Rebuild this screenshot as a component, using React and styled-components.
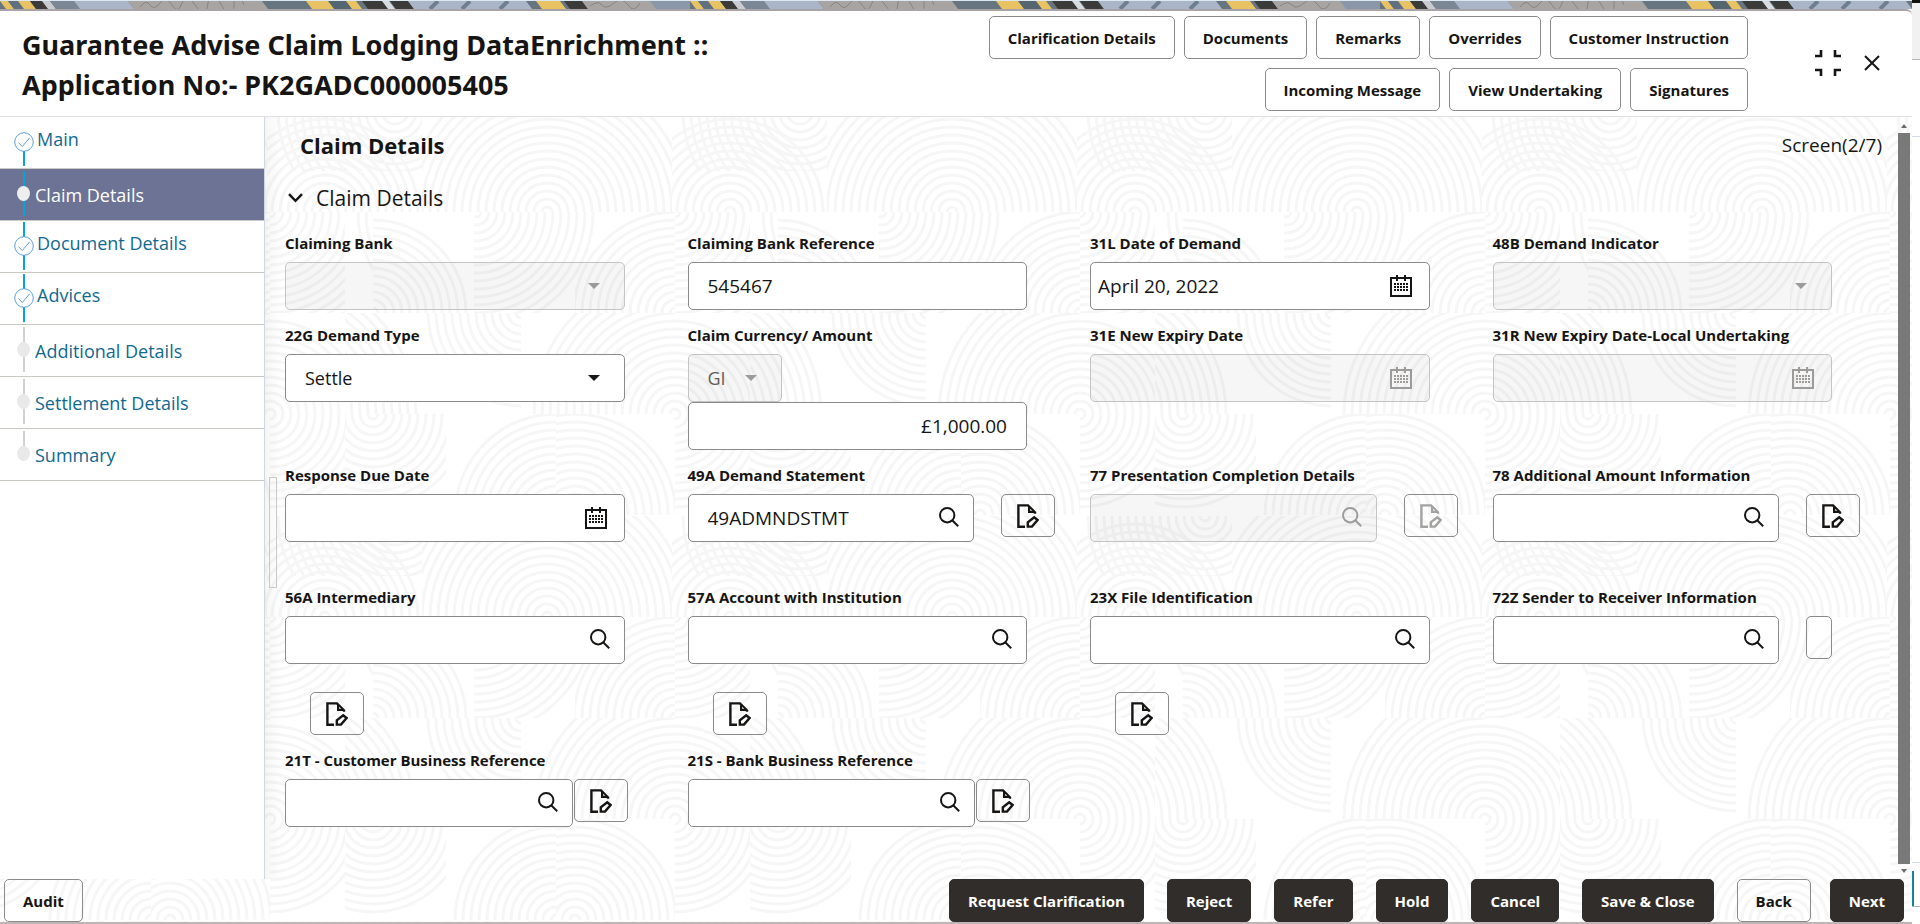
import React, { useId } from 'react'
import styled, { createGlobalStyle, css } from "styled-components";

const GlobalStyle = createGlobalStyle`
    * {
        box-sizing: border-box;
    }
    body {
        margin: 0;
        background: #fff;
        color: #161513;
        font-family: "Open Sans", "Noto Sans", sans-serif;
    }
    button, input, select {
        font-family: inherit;
        color: inherit;
        margin: 0;
    }
`;

const Page = styled.div`
    display: flex;
    min-height: 100vh;
`;

const Modal = styled.div`
    position: relative;
    flex: 1;
    min-width: 0;
    display: flex;
    flex-direction: column;
    border-bottom: 2px solid #c0b4b7;
`;

const Strip = styled.svg`
    position: relative;
    display: block;
    width: 100%;
    height: 9px;
`;

const Backdrop = styled.svg`
    position: absolute;
    inset: 0;
    width: 100%;
    height: 100%;
    pointer-events: none;
`;

const Header = styled.header`
    position: relative;
    display: flex;
    align-items: flex-start;
    justify-content: space-between;
    padding: 5px 32px 5px 22px;
    background: #fff;
    border-top: 2px solid #a9a3a5;
    border-bottom: 1px solid #dfdfdf;
    border-top-right-radius: 6px;
`;

const Title = styled.h1`
    flex: 1;
    max-width: 720px;
    margin: 0;
    padding-top: 9px;
    font-size: 27px;
    line-height: 40px;
    font-weight: 700;
    font-family: "Noto Sans", sans-serif;
`;

const HeaderSide = styled.div`
    display: flex;
    align-items: flex-start;
    gap: 66px;
`;

const HeaderButtons = styled.div`
    display: flex;
    flex-wrap: wrap;
    justify-content: flex-end;
    gap: 9px;
    width: 780px;
`;

const WindowButtons = styled.div`
    display: flex;
    align-items: center;
    gap: 22px;
    padding-top: 33px;
`;

const PlainButton = styled.button`
    display: flex;
    padding: 0;
    border: none;
    background: none;
    cursor: pointer;
`;

const Button = styled.button`
    height: 43px;
    padding: 0 18px;
    border: 1px solid #8b8989;
    border-radius: 5px;
    background: transparent;
    font-size: 15px;
    font-weight: 700;
    white-space: nowrap;
    cursor: pointer;
    ${({ $dark }) => $dark && css`
        background: #312d2a;
        border-color: #312d2a;
        color: #fff;
    `}
`;

const Body = styled.div`
    position: relative;
    flex: 1;
    display: flex;
`;

const Nav = styled.nav`
    width: 265px;
    flex-shrink: 0;
    background: #fff;
    border-right: 1px solid #cfd9e6;
`;

const NavList = styled.ul`
    margin: 0;
    padding: 0;
    list-style: none;
`;

const NavLink = styled.a`
    display: flex;
    align-items: center;
    height: 52px;
    padding-left: 13px;
    border-bottom: 1px solid #cbc9c4;
    font-size: 18px;
    color: ${({ $active }) => $active ? '#fff' : '#11698f'};
    background: ${({ $active }) => $active ? '#6c7394' : 'transparent'};
    text-decoration: none;
    span {
        padding-left: ${({ $done }) => $done ? '2px' : '0'};
        padding-bottom: ${({ $done }) => $done ? '7px' : '0'};
    }
`;

const Main = styled.main`
    position: relative;
    flex: 1;
    min-width: 0;
    padding: 12px 3px 20px 20px;
    box-shadow: inset 22px 0 20px -20px rgba(0, 0, 0, 0.07);
`;

const Splitter = styled.div`
    position: absolute;
    left: 4px;
    top: 360px;
    width: 8px;
    height: 111px;
    border: 1px solid #c9c9c9;
`;

const ScreenHead = styled.div`
    display: flex;
    justify-content: space-between;
    padding: 0 13px 0 15px;
    line-height: 32px;
`;

const ScreenTitle = styled.h2`
    margin: 0;
    font-size: 22px;
`;

const ScreenCount = styled.span`
    font-size: 19px;
`;

const SectionButton = styled(PlainButton)`
    align-items: center;
    gap: 13px;
    margin: 22px 0 18px 3px;
    font-size: 21px;
    line-height: 30px;
    font-weight: 500;
`;

const Rows = styled.form`
    display: flex;
    flex-direction: column;
    gap: 13px;
`;

const Row = styled.div`
    display: grid;
    grid-template-columns: repeat(4, 1fr);
    padding-bottom: ${({ $roomy }) => $roomy ? '30px' : '0'};
`;

const Cell = styled.div`
    display: flex;
    flex-direction: column;
    min-width: 0;
    padding-right: ${({ $edit }) => $edit === 'side' ? '35px' : $edit === 'tight' ? '60px' : '63px'};
`;

const Label = styled.label`
    margin-bottom: 7px;
    font-size: 15px;
    line-height: 24px;
    font-weight: 700;
    white-space: nowrap;
`;

const Controls = styled.div`
    display: flex;
    align-items: flex-start;
    flex-direction: ${({ $edit }) => $edit === 'below' ? 'column' : 'row'};
    gap: ${({ $edit }) => $edit === 'below' ? '28px' : $edit === 'tight' ? '1px' : '27px'};
`;

const Box = styled.div`
    display: flex;
    align-items: center;
    flex: ${({ $short }) => $short ? 'none' : '1 1 auto'};
    width: ${({ $short }) => $short ? '94px' : '100%'};
    min-width: 0;
    height: 48px;
    border: 1px solid ${({ $disabled }) => $disabled ? '#c4c4c3' : '#8b8989'};
    border-radius: 5px;
    background: ${({ $disabled }) => $disabled ? 'rgba(22, 21, 19, 0.04)' : '#fff'};
    color: ${({ $disabled }) => $disabled ? '#9c9b9a' : '#161513'};
`;

const bare = css`
    flex: 1;
    width: 100%;
    min-width: 0;
    height: 100%;
    padding: 0 19px;
    border: none;
    outline: none;
    background: transparent;
    color: #161513;
    opacity: 1;
`;

const Input = styled.input`
    ${bare}
    padding: ${({ $date }) => $date ? '0 7px' : '0 19px'};
    font-size: 19px;
    text-align: ${({ $right }) => $right ? 'right' : 'left'};
`;

const Select = styled.select`
    ${bare}
    appearance: none;
    padding-right: 0;
    font-size: 18px;
    &:disabled {
        color: #5f5e5c;
    }
`;

const Arrow = styled.svg`
    flex-shrink: 0;
    width: 12px;
    height: 6px;
    margin-right: 24px;
    pointer-events: none;
`;

const FieldIcon = styled(PlainButton)`
    flex-shrink: 0;
    margin-right: ${({ $date }) => $date ? '17px' : '14px'};
    padding-bottom: ${({ $date }) => $date ? '0' : '3px'};
    color: inherit;
`;

const EditButton = styled.button`
    display: flex;
    align-items: center;
    justify-content: center;
    flex-shrink: 0;
    width: ${({ $empty }) => $empty ? '26px' : '54px'};
    height: 43px;
    margin-left: ${({ $below }) => $below ? '25px' : '0'};
    padding: 0;
    border: 1px solid #8b8989;
    border-radius: 5px;
    background: transparent;
    color: ${({ disabled }) => disabled ? '#a3a2a1' : '#161513'};
`;

const ScrollBar = styled.div`
    display: flex;
    flex-direction: column;
    align-items: center;
    gap: 5px;
    width: 14px;
    padding: 7px 2px 6px 0;
    svg {
        width: 6px;
        height: 4px;
    }
`;

const Thumb = styled.div`
    flex: 1;
    align-self: stretch;
    background: #797979;
`;

const Footer = styled.footer`
    position: relative;
    display: flex;
    justify-content: space-between;
    padding: 0 8px 0 4px;
`;

const FooterGroup = styled.div`
    display: flex;
    gap: ${({ $tight }) => $tight ? '19px' : '23px'};
`;

const Edge = styled.aside`
    display: flex;
    flex-direction: column;
    width: 8px;
    background: #fff;
`;

const EdgeTop = styled.div`
    height: 60px;
    border-top: 3px solid #111;
    border-bottom: 1px solid #b5b5b5;
    background: #f1f1f1;
`;

const EdgeMiddle = styled.div`
    flex: 1;
    margin-top: 76px;
    border-top: 1px solid #d3dced;
    border-bottom: 1px solid #d3dced;
`;

const EdgeTab = styled.div`
    width: 2px;
    height: 35px;
    margin-top: 8px;
    background: #17849c;
`;

const EdgeBottom = styled.div`
    height: 18px;
    border-top: 1px solid #a9b4c4;
`;

const stripShapes = [
    ['#e8c263', 0, 8], ['#5f7080', 8, 26], ['#e8c263', 18, 12], ['#3b3b3a', 30, 16], ['#c9cbd0', 42, 8],
    ['#7b8794', 50, 24], ['#aab6c8', 74, 54], ['#a8a4a2', 128, 138], ['#66757f', 262, 40], ['#e8c263', 306, 24],
    ['#54666f', 328, 22], ['#e8c263', 346, 10], ['#3b3b3a', 362, 22], ['#d8dbe0', 382, 7], ['#3b3b3a', 390, 18],
    ['#aab6c8', 408, 118], ['#e8c263', 536, 24], ['#3b3b3a', 564, 18], ['#a8a4a2', 582, 92], ['#8a97a8', 650, 40],
];

function TopStrip() {
    return (
        <Strip aria-hidden="true">
            <defs>
                <pattern id="weave" width="690" height="9" patternUnits="userSpaceOnUse">
                    <rect width="690" height="9" fill="#66757f" />
                    {stripShapes.map(([fill, x, w]) => (
                        <path key={x} d={`M${x} 1h${w}l6 8h${-w}z`} fill={fill} />
                    ))}
                    <path d="M140 7q6-8 10-2t10-2 12 2 10-2 14 3 12-3 14 3 12-3 10 2M590 6q8-6 12-1t12-2 14 2 12-2" fill="none" stroke="#868382" strokeWidth="1" />
                    <path d="M430 9l8-8M462 9l8-8M500 9l8-8" stroke="#6f7f92" strokeWidth="4" />
                    <rect width="690" height="1" fill="#dce9f3" />
                </pattern>
            </defs>
            <rect width="100%" height="9" fill="url(#weave)" />
        </Strip>
    );
}

// every cell is clipped to its own rect: x, y, width, height, then the centre and radius of its rings
const ringCells = [
    [77, 304, 250, 101, 202, 405, 150],
    [0, 304, 77, 101, -20, 405, 100],
    [327, 304, 78, 101, 385, 405, 100],
    [327, 304, 78, 60, 455, 304, 125],
    [0, 304, 77, 60, 50, 304, 105],
    [0, 0, 28, 101, 130, 0, 125],
    [28, 0, 101, 101, 28, 101, 101],
    [129, 0, 126, 101, 131, 0, 125],
    [230, 0, 100, 101, 330, 101, 105],
    [330, 0, 75, 101, 330, 0, 150],
    [0, 101, 75, 101, -70, 202, 150],
    [75, 101, 101, 101, 176, 101, 101],
    [176, 101, 154, 101, 330, 202, 150],
    [330, 101, 75, 101, 330, 202, 101],
    [0, 202, 101, 101, 28, 202, 101],
    [101, 202, 110, 101, 211, 303, 108],
    [211, 202, 119, 101, 230, 303, 110],
    [330, 202, 75, 101, 330, 202, 101],
];

function RingBackdrop() {
    return (
        <Backdrop aria-hidden="true">
            <defs>
                {ringCells.map(([x, y, w, h], i) => (
                    <clipPath key={i} id={`cell${i}`}><rect x={x} y={y} width={w} height={h} /></clipPath>
                ))}
                <pattern id="rings" x="345" y="212" width="405" height="405" patternUnits="userSpaceOnUse">
                    {ringCells.map(([, , , , cx, cy, max], i) => (
                        <g key={i} clipPath={`url(#cell${i})`} fill="none" stroke="#f6f6f6" strokeWidth="3">
                            {Array.from({ length: Math.floor(max / 8) }, (_, n) => (
                                <circle key={n} cx={cx} cy={cy} r={5 + n * 8} />
                            ))}
                        </g>
                    ))}
                </pattern>
            </defs>
            <rect width="100%" height="100%" fill="url(#rings)" />
        </Backdrop>
    );
}

const SearchIcon = () => (
    <svg width="20" height="20" viewBox="0 0 20 20" fill="none" stroke="currentColor" strokeWidth="2">
        <circle cx="8.2" cy="8.2" r="7.2" />
        <path d="M13.2 13.2l6 6" />
    </svg>
);

const CalendarIcon = () => (
    <svg width="22" height="22" viewBox="0 0 22 22" fill="none" stroke="currentColor">
        <path d="M1 3h20v18H1zM7 0v6M15 0v6" strokeWidth="2" />
        <path d="M4 9h15M4 12h15M4 15h15" strokeWidth="2" strokeDasharray="2 1" />
    </svg>
);

const EditIcon = () => (
    <svg width="22" height="24" viewBox="0 0 22 24" fill="none" stroke="currentColor" strokeWidth="2.4">
        <path d="M8 22.8H1.4V1.4H11l7 7v1.4" />
        <path d="M11 1v8h8.4z" fill="currentColor" stroke="none" />
        <path d="M13.2 4.8v2h2z" fill="#fff" stroke="none" />
        <path d="M10.8 22.6v-4.2l6.4-5.2 3.4 2.8-5.6 6.6z" />
    </svg>
);

const Triangle = ({ up }) => (
    <svg viewBox="0 0 12 6" preserveAspectRatio="none"><path d={up ? "M0 6h12L6 0z" : "M0 0h12L6 6z"} fill="#6b6b6b" /></svg>
);

function StepMarker({ state, first, last, lead }) {
    const done = state === 'done';
    const line = lead ? '#03a5dc' : '#d2d2d2';
    return (
        <svg width="22" height="51" viewBox="0 0 22 51" fill="none" aria-hidden="true">
            {!first && <path d={done ? "M11 1v17" : "M11 2v18"} stroke={line} strokeWidth="2" />}
            {!last && <path d={done ? "M11 34v15" : "M11 28v19"} stroke={line} strokeWidth="2" />}
            {done
                ? <g stroke="#5b9fd8"><circle cx="11" cy="25" r="9.3" fill={first ? 'none' : '#fff'} /><path d="M5.5 25.5l3.8 4L16.5 21" /></g>
                : <ellipse cx="10.5" cy="24.5" rx="6.5" ry="7.5" fill={state === 'active' ? '#eee' : '#e9e9e9'} />}
        </svg>
    );
}

const steps = [
    { name: 'Main', state: 'done', lead: true },
    { name: 'Claim Details', state: 'active', lead: true },
    { name: 'Document Details', state: 'done', lead: true },
    { name: 'Advices', state: 'done', lead: true },
    { name: 'Additional Details', state: 'todo' },
    { name: 'Settlement Details', state: 'todo' },
    { name: 'Summary', state: 'todo' },
];

function EditAction({ label, ...props }) {
    return (
        <EditButton type="button" aria-label={`Edit ${label}`} {...props}>
            {!props.$empty && <EditIcon />}
        </EditButton>
    );
}

function SelectBox({ id, value, disabled, short, ariaLabel }) {
    return (
        <Box $disabled={disabled} $short={short}>
            <Select id={id} disabled={disabled} defaultValue={value} aria-label={ariaLabel}>
                <option value={value}>{value}</option>
            </Select>
            <Arrow viewBox="0 0 12 6"><path d="M0 0h12L6 6z" fill="currentColor" /></Arrow>
        </Box>
    );
}

function Field({ label, type = 'text', value = '', disabled, edit, empty }) {
    const id = useId();
    return (
        <Cell $edit={empty ? undefined : edit}>
            <Label htmlFor={id}>{label}</Label>
            <Controls $edit={edit}>
                {type === 'select'
                    ? <SelectBox id={id} value={value} disabled={disabled} />
                    : <Box $disabled={disabled}>
                        <Input id={id} type="text" defaultValue={value} disabled={disabled} $date={type === 'date'} />
                        {type === 'date' && <FieldIcon type="button" $date disabled={disabled} aria-label={`Pick ${label}`}><CalendarIcon /></FieldIcon>}
                        {type === 'search' && <FieldIcon type="button" disabled={disabled} aria-label={`Search ${label}`}><SearchIcon /></FieldIcon>}
                    </Box>}
                {edit && <EditAction label={label} disabled={disabled} $below={edit === 'below'} $empty={empty} />}
            </Controls>
        </Cell>
    );
}

function AmountField() {
    const id = useId();
    return (
        <Cell>
            <Label htmlFor={id}>Claim Currency/ Amount</Label>
            <SelectBox value="GI" disabled short ariaLabel="Currency" />
            <Box><Input id={id} type="text" defaultValue="£1,000.00" $right /></Box>
        </Cell>
    );
}

export default function App() {
    return (
        <Page>
            <GlobalStyle />
            <Modal>
                <RingBackdrop />
                <TopStrip />
                <Header>
                    <Title>Guarantee Advise Claim Lodging DataEnrichment :: Application No:- PK2GADC000005405</Title>
                    <HeaderSide>
                        <HeaderButtons>
                            {['Clarification Details', 'Documents', 'Remarks', 'Overrides', 'Customer Instruction', 'Incoming Message', 'View Undertaking', 'Signatures'].map((name) => (
                                <Button key={name} type="button">{name}</Button>
                            ))}
                        </HeaderButtons>
                        <WindowButtons>
                            <PlainButton type="button" aria-label="Collapse">
                                <svg width="28" height="28" viewBox="0 0 28 28" fill="none" stroke="currentColor" strokeWidth="2.6">
                                    <path d="M1 7h6V1M21 1v6h6M1 21h6v6M21 27v-6h6" />
                                </svg>
                            </PlainButton>
                            <PlainButton type="button" aria-label="Close">
                                <svg width="16" height="16" viewBox="0 0 16 16" stroke="currentColor" strokeWidth="2">
                                    <path d="M1 1l14 14M15 1L1 15" />
                                </svg>
                            </PlainButton>
                        </WindowButtons>
                    </HeaderSide>
                </Header>
                <Body>
                    <Nav>
                        <NavList>
                            {steps.map(({ name, state, lead }, i) => (
                                <li key={name}>
                                    <NavLink href="#" $active={state === 'active'} $done={state === 'done'}>
                                        <StepMarker state={state} lead={lead} first={i === 0} last={i === steps.length - 1} />
                                        <span>{name}</span>
                                    </NavLink>
                                </li>
                            ))}
                        </NavList>
                    </Nav>
                    <Main>
                        <Splitter />
                        <ScreenHead>
                            <ScreenTitle>Claim Details</ScreenTitle>
                            <ScreenCount>Screen(2/7)</ScreenCount>
                        </ScreenHead>
                        <SectionButton type="button">
                            <svg width="15" height="10" viewBox="0 0 15 10" fill="none" stroke="currentColor" strokeWidth="2.4">
                                <path d="M1 1.2l6.5 6.6L14 1.2" />
                            </svg>
                            Claim Details
                        </SectionButton>
                        <Rows>
                            <Row>
                                <Field label="Claiming Bank" type="select" disabled />
                                <Field label="Claiming Bank Reference" value="545467" />
                                <Field label="31L Date of Demand" type="date" value="April 20, 2022" />
                                <Field label="48B Demand Indicator" type="select" disabled />
                            </Row>
                            <Row>
                                <Field label="22G Demand Type" type="select" value="Settle" />
                                <AmountField />
                                <Field label="31E New Expiry Date" type="date" disabled />
                                <Field label="31R New Expiry Date-Local Undertaking" type="date" disabled />
                            </Row>
                            <Row $roomy>
                                <Field label="Response Due Date" type="date" />
                                <Field label="49A Demand Statement" type="search" value="49ADMNDSTMT" edit="side" />
                                <Field label="77 Presentation Completion Details" type="search" disabled edit="side" />
                                <Field label="78 Additional Amount Information" type="search" edit="side" />
                            </Row>
                            <Row>
                                <Field label="56A Intermediary" type="search" edit="below" />
                                <Field label="57A Account with Institution" type="search" edit="below" />
                                <Field label="23X File Identification" type="search" edit="below" />
                                <Field label="72Z Sender to Receiver Information" type="search" edit="side" empty />
                            </Row>
                            <Row>
                                <Field label="21T - Customer Business Reference" type="search" edit="tight" />
                                <Field label="21S - Bank Business Reference" type="search" edit="tight" />
                            </Row>
                        </Rows>
                    </Main>
                    <ScrollBar aria-hidden="true">
                        <Triangle up />
                        <Thumb />
                        <Triangle />
                    </ScrollBar>
                </Body>
                <Footer>
                    <Button type="button">Audit</Button>
                    <FooterGroup>
                        {['Request Clarification', 'Reject', 'Refer', 'Hold', 'Cancel', 'Save & Close'].map((name) => (
                            <Button key={name} type="button" $dark>{name}</Button>
                        ))}
                        <FooterGroup $tight>
                            <Button type="button">Back</Button>
                            <Button type="button" $dark>Next</Button>
                        </FooterGroup>
                    </FooterGroup>
                </Footer>
            </Modal>
            <Edge>
                <EdgeTop />
                <EdgeMiddle />
                <EdgeTab />
                <EdgeBottom />
            </Edge>
        </Page>
    )
}
